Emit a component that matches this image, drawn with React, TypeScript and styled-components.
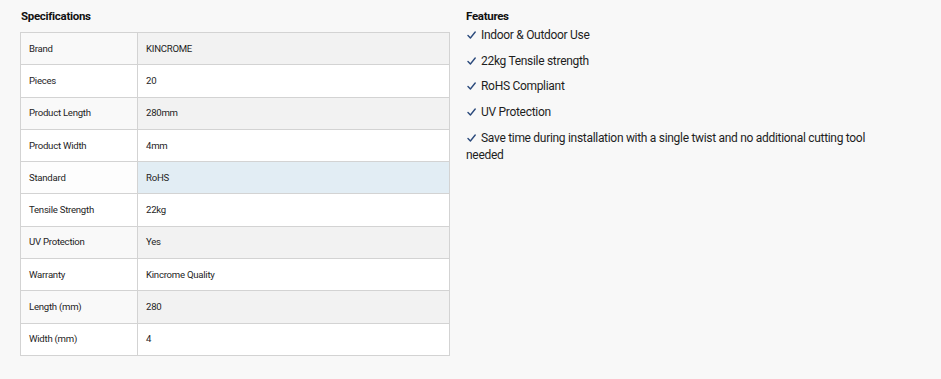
import styled, { createGlobalStyle } from 'styled-components'

const GlobalStyle = createGlobalStyle`
    html, body {
        margin: 0;
        padding: 0;
        background: #f8f8f8;
    }
    body {
        font-family: Roboto, 'Liberation Sans', sans-serif;
        color: #222;
    }
`

const Page = styled('section')`
    display: grid;
    grid-template-columns: 430px 430px;
    column-gap: 16px;
    padding: 8px 20px 0;
`

const Heading = styled('h3')`
    margin: 0 0 0 1px;
    font-size: 11.5px;
    line-height: 16px;
    font-weight: 700;
    letter-spacing: -0.3px;
    color: #111;
`

const FeatHeading = styled(Heading)`
    margin-left: 0;
`

const SpecTable = styled('table')`
    width: 100%;
    margin-top: 8px;
    border-collapse: collapse;
    border: 1px solid #d3d3d3;
`

type RowProps = { $striped: boolean; $active?: boolean }

const Row = styled('tr')<RowProps>`
    height: 32.3px;
    border-bottom: 1px solid #d3d3d3;

    td:first-child {
        background: ${({ $striped, $active }) =>
            $active ? '#fdfdfd' : $striped ? '#f9f9f9' : '#fff'};
    }
    td:last-child {
        background: ${({ $striped, $active }) =>
            $active ? '#e2edf4' : $striped ? '#f2f2f2' : '#fff'};
    }
`

const Cell = styled('td')`
    padding: 0 8px;
    font-size: 9.6px;
    letter-spacing: -0.25px;
    color: #1e1e1e;
    vertical-align: middle;
    padding-bottom: 1px;

    &:first-child {
        width: 100px;
        border-right: 1px solid #d3d3d3;
    }
`

const FeatureList = styled('ul')`
    list-style: none;
    margin: 3px 0 0;
    padding: 0;
`

const Feature = styled('li')`
    font-size: 12px;
    line-height: 17px;
    letter-spacing: -0.3px;
    color: #1e1e1e;
    margin-bottom: 8.7px;
`

const Tick = styled('svg')`
    display: inline-block;
    width: 9px;
    height: 8px;
    margin: 0 5px 0 1px;
    vertical-align: 0;
`

const TickMark = () => (
    <Tick viewBox="0 0 9 8">
        <path
            d="M1 4.6 L3.4 7 L8.2 1"
            fill="none"
            stroke="#2b4a7c"
            strokeWidth="1.4"
            strokeLinecap="round"
            strokeLinejoin="round"
        />
    </Tick>
)

const specs: [string, string][] = [
    ['Brand', 'KINCROME'],
    ['Pieces', '20'],
    ['Product Length', '280mm'],
    ['Product Width', '4mm'],
    ['Standard', 'RoHS'],
    ['Tensile Strength', '22kg'],
    ['UV Protection', 'Yes'],
    ['Warranty', 'Kincrome Quality'],
    ['Length (mm)', '280'],
    ['Width (mm)', '4'],
]

const features = [
    'Indoor & Outdoor Use',
    '22kg Tensile strength',
    'RoHS Compliant',
    'UV Protection',
    'Save time during installation with a single twist and no additional cutting tool needed',
]

const App = () => {
    return (
        <>
            <GlobalStyle />
            <Page>
                <div>
                    <Heading>Specifications</Heading>
                    <SpecTable>
                        <tbody>
                            {specs.map(([label, value], i) => (
                                <Row
                                    key={label}
                                    $striped={i % 2 === 0}
                                    $active={label === 'Standard'}
                                >
                                    <Cell>{label}</Cell>
                                    <Cell>{value}</Cell>
                                </Row>
                            ))}
                        </tbody>
                    </SpecTable>
                </div>
                <div>
                    <FeatHeading>Features</FeatHeading>
                    <FeatureList>
                        {features.map((f) => (
                            <Feature key={f}>
                                <TickMark />
                                {f}
                            </Feature>
                        ))}
                    </FeatureList>
                </div>
            </Page>
        </>
    )
}

export default App
